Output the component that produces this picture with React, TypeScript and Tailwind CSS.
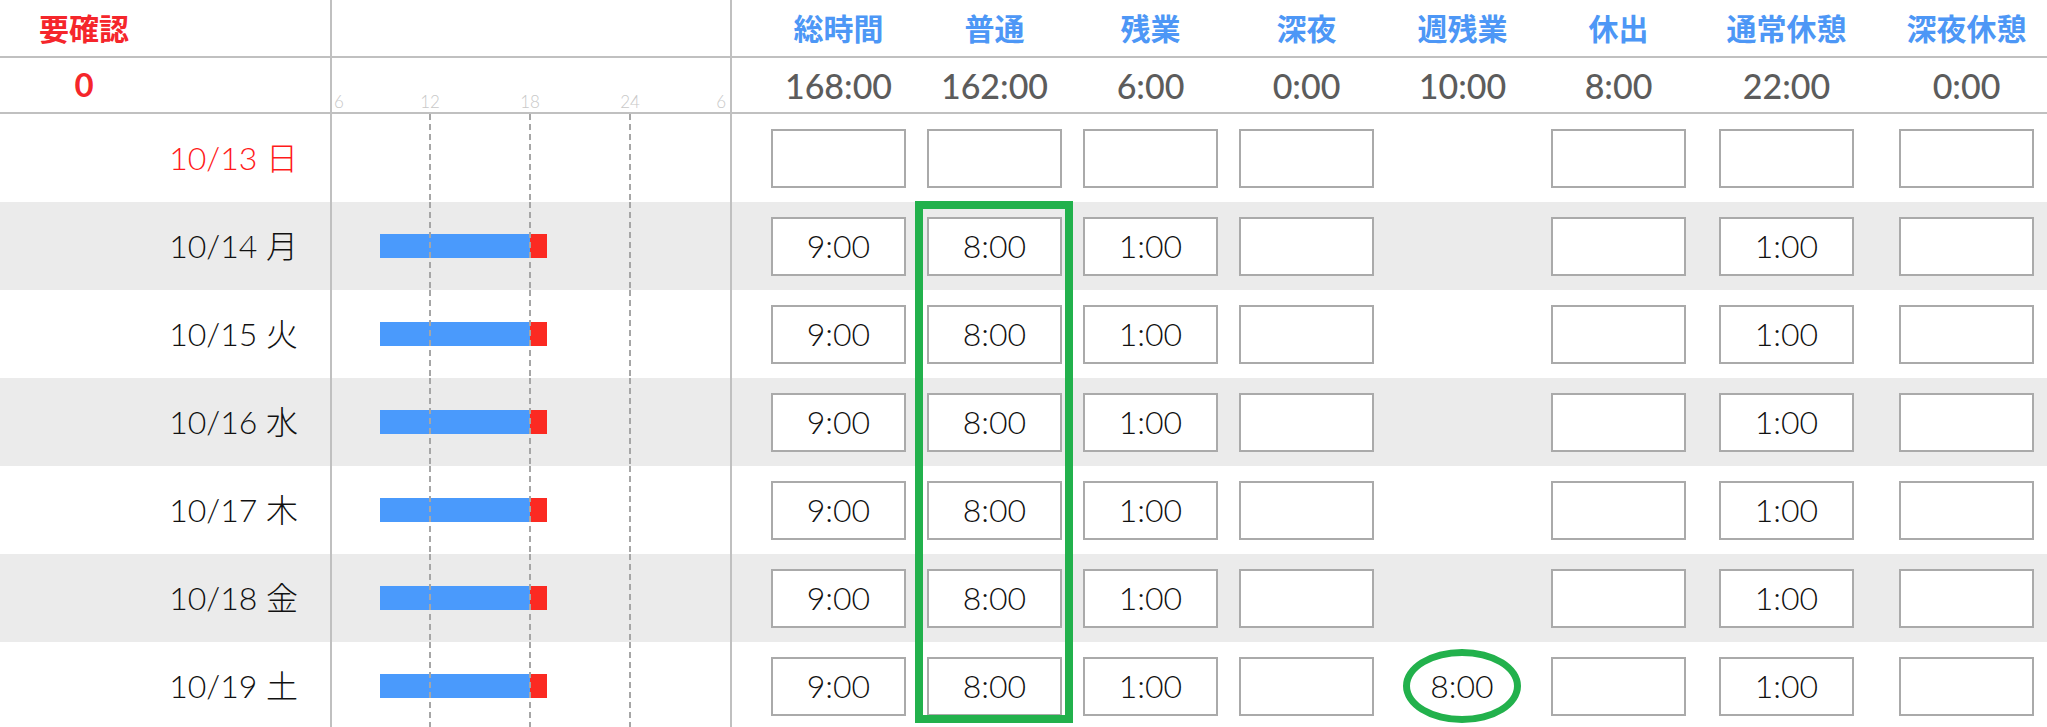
import React from "react";

type Day = { date: string; wd: string; holiday?: boolean; weekly?: string };

const days: Day[] = [
  { date: "10/13", wd: "日", holiday: true },
  { date: "10/14", wd: "月" },
  { date: "10/15", wd: "火" },
  { date: "10/16", wd: "水" },
  { date: "10/17", wd: "木" },
  { date: "10/18", wd: "金" },
  { date: "10/19", wd: "土", weekly: "8:00" },
];

const headers = ["総時間", "普通", "残業", "深夜", "週残業", "休出", "通常休憩", "深夜休憩"];
const totals = ["168:00", "162:00", "6:00", "0:00", "10:00", "8:00", "22:00", "0:00"];

const rowGrid =
  "grid grid-cols-[330px_402px_39px_156px_156px_156px_156px_156px_168px_180px_1fr]";

const font = { fontFamily: '"Lato", "Noto Sans CJK JP", sans-serif' };

function TimeBox({ value }: { value: string }) {
  return (
    <div className="w-[135px] h-[59px] border-2 border-[#aaaaaa] bg-white flex items-center justify-center text-[32px] font-light text-[#111]">
      {value}
    </div>
  );
}

function ChartCell({ bar }: { bar: boolean }) {
  return (
    <div className="border-x-2 border-[#c0c0c0] h-full">
      <svg width="398" height="88" className="block">
        {bar && (
          <>
            <rect x="48" y="32" width="150" height="24" fill="#4a9afc" />
            <rect x="198" y="32" width="17" height="24" fill="#fb2a22" />
          </>
        )}
        {[98, 198, 298].map((x) => (
          <line key={x} x1={x} y1="0" x2={x} y2="88" stroke="#a6a6a6" strokeWidth="2" strokeDasharray="6 4" />
        ))}
      </svg>
    </div>
  );
}

export default function App() {
  return (
    <div className="relative w-[2047px] h-[727px] overflow-hidden bg-white" style={font}>
      {/* ヘッダー */}
      <div className={`${rowGrid} h-[58px] border-b-2 border-[#c0c0c0]`}>
        <div className="w-[168px] flex items-center justify-center text-[30px] font-bold text-[#f5262b]">要確認</div>
        <div className="border-x-2 border-[#c0c0c0]" />
        <div />
        {headers.map((h) => (
          <div key={h} className="w-[135px] flex items-center justify-center text-[30px] font-bold text-[#4d97f6] whitespace-nowrap">
            {h}
          </div>
        ))}
      </div>

      {/* 合計 */}
      <div className={`${rowGrid} h-[56px] border-b-2 border-[#c0c0c0]`}>
        <div className="w-[168px] flex items-center justify-center text-[33px] font-bold text-[#f5262b]">0</div>
        <div className="border-x-2 border-[#c0c0c0]">
          <svg width="398" height="54" className="block" fontWeight="300">
            <text x="2" y="50" fontSize="17" fill="#c8c8c8">6</text>
            <text x="98" y="50" fontSize="17" fill="#c8c8c8" textAnchor="middle">12</text>
            <text x="198" y="50" fontSize="17" fill="#c8c8c8" textAnchor="middle">18</text>
            <text x="298" y="50" fontSize="17" fill="#c8c8c8" textAnchor="middle">24</text>
            <text x="394" y="50" fontSize="17" fill="#c8c8c8" textAnchor="end">6</text>
          </svg>
        </div>
        <div />
        {totals.map((t, i) => (
          <div key={i} className="w-[135px] flex items-center justify-center text-[34px] font-medium text-[#5c5c5c] whitespace-nowrap">
            {t}
          </div>
        ))}
      </div>

      {/* 日別 */}
      {days.map((d, i) => (
        <div key={d.date} className={`${rowGrid} h-[88px] ${i % 2 === 1 ? "bg-[#ebebeb]" : "bg-white"}`}>
          <div className={`flex items-center justify-end pr-[32px] text-[32px] font-light ${d.holiday ? "text-[#ff1a1a]" : "text-[#111]"}`}>
            {d.date}&nbsp;{d.wd}
          </div>
          <ChartCell bar={!d.holiday} />
          <div />
          <div className="flex items-center"><TimeBox value={d.holiday ? "" : "9:00"} /></div>
          <div className="flex items-center"><TimeBox value={d.holiday ? "" : "8:00"} /></div>
          <div className="flex items-center"><TimeBox value={d.holiday ? "" : "1:00"} /></div>
          <div className="flex items-center"><TimeBox value="" /></div>
          <div className="flex items-center">
            {d.weekly && (
              <div className="ml-[8px] w-[118px] h-[74px] rounded-[50%] border-[7px] border-[#22b14c] flex items-center justify-center text-[32px] font-light text-[#111]">
                {d.weekly}
              </div>
            )}
          </div>
          <div className="flex items-center"><TimeBox value="" /></div>
          <div className="flex items-center"><TimeBox value={d.holiday ? "" : "1:00"} /></div>
          <div className="flex items-center"><TimeBox value="" /></div>
        </div>
      ))}

      {/* 普通列の強調枠 */}
      <div className="absolute left-[915px] top-[201px] w-[158px] h-[522px] border-8 border-[#22b14c] pointer-events-none" />
    </div>
  );
}
